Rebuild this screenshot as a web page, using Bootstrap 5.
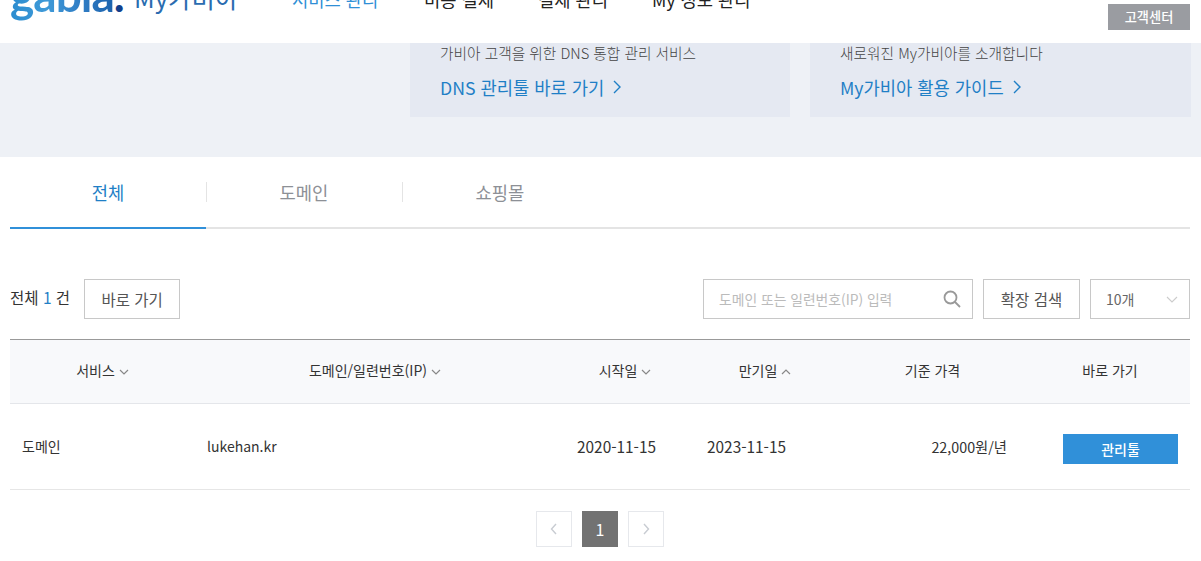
<!DOCTYPE html>
<html lang="ko"><head><meta charset="utf-8">
<link href="https://cdn.jsdelivr.net/npm/bootstrap@5.3.0/dist/css/bootstrap.min.css" rel="stylesheet">
<style>
html,body{height:561px;overflow:hidden}
body{font-family:"Noto Sans CJK KR","Noto Sans",sans-serif;color:#333;font-size:14px;background:#fff}
.top-bar{height:43px;overflow:hidden;align-items:flex-start}
.logo-word{font-family:Lato,sans-serif;font-weight:700;font-size:46px;line-height:50px;margin:-30px 0 0 10px;width:125px;flex:none;white-space:nowrap;letter-spacing:-1px}
.logo-txt{background:linear-gradient(90deg,#2b8ccf,#3f9ad8 35%,#2f7cc4 70%,#1d63ad);-webkit-background-clip:text;background-clip:text;-webkit-text-fill-color:transparent}
.logo-dot{color:#123f8c}
.logo-sub{font-size:25.5px;line-height:36px;color:#2a6cb0;margin-top:-21px;margin-left:-1px;width:158px;flex:none;white-space:nowrap}
.gnb-item{font-size:17.7px;line-height:26px;color:#222;margin-top:-14px;white-space:nowrap;flex:none}
.gnb-on{color:#2f8fd6;width:132px}.gnb-2{width:114px}.gnb-3{width:114px}
.support-btn{margin:4px 11px 0 auto;width:82px;height:26px;background:#9a9ca1;color:#fff;font-size:13.2px;font-weight:500;line-height:26px;text-align:center}
.banner-band{height:114px;background:#eef1f6;padding-left:410px;gap:20px}
.banner-box{width:380px;height:74px;background:#e5e9f2;padding-left:30px}
.box-2{width:381px}
.banner-sub{font-size:14.7px;line-height:20px;color:#444;height:20px;font-weight:300}
.banner-link{font-size:17.7px;line-height:26px;color:#1f7fc6;margin-top:11px;gap:9px}
.tab-row{height:72px;margin:0 11px 0 10px;border-bottom:2px solid #e4e4e4}
.tab-cell{width:196px;height:72px;font-size:17.7px;color:#8d9096;padding-top:22px;text-align:center;line-height:26px;position:relative}
.tab-cell+.tab-cell::before{content:"";position:absolute;left:0;top:25px;height:20px;border-left:1px solid #e4e4e4}
.tab-on{color:#1f7fc6;border-bottom:2px solid #3090d9}
.tool-row{margin:50px 11px 20px 10px;height:40px}
.count{font-size:15.5px;line-height:20px;color:#333;margin-right:14px;margin-bottom:4px}
.count b{font-weight:400;color:#1f7fc6}
.line-btn{height:40px;border:1px solid #c8c8c8;background:#fff;font-size:15.5px;color:#555;line-height:38px;text-align:center}
.go-btn{width:96px}.ext-btn{width:97px;margin-left:10px}
.sel-box{width:100px;margin-left:10px;padding:0 11px 0 15px;justify-content:space-between;color:#666;font-size:14px}
.search-box{width:270px;margin-left:auto;padding:0 11px 0 15px;justify-content:space-between;color:#bbb;font-size:13.8px}
.grid-tbl{margin:0 11px 0 10px;width:1180px;table-layout:fixed;border-collapse:collapse}
.grid-tbl th{height:64px;background:#f8f9fb;border-top:1px solid #999;border-bottom:1px solid #e4e6ea;font-weight:400;font-size:14px;color:#333;text-align:center;vertical-align:middle;padding:0 0 2px}
.grid-tbl td{height:86px;border-bottom:1px solid #e6e6e6;font-size:14px;color:#333;padding:0;vertical-align:middle}
.grid-tbl td.cell-l{padding-left:12px}
.grid-tbl td.date-a{padding-left:22px;font-size:15.4px}
.grid-tbl td.date-b{padding-left:12px;font-size:15.4px}
.grid-tbl td.price{padding-right:23px;text-align:right;font-size:14.3px}
.sort{display:inline-block;vertical-align:1px;margin-left:4px}
.manage-btn{display:block;width:115px;height:30px;background:#3090d9;color:#fff;font-size:14px;line-height:30px;text-align:center;font-weight:500;margin:4px 12px 0 auto}
.pager{gap:10px;margin:21px 1px 0 0}
.pg{width:36px;height:36px;border:1px solid #e6e8ec;background:#fff;color:#aaa;align-items:center;justify-content:center}
.pg-on{background:#727272;border-color:#727272;color:#fff;font-size:16px}
</style></head><body>
<header class="top-bar d-flex">
<div class="logo-word"><span class="logo-txt">gabia</span><span class="logo-dot">.</span></div>
<div class="logo-sub">My가비아</div>
<div class="gnb-item gnb-on">서비스 관리</div>
<div class="gnb-item gnb-2">비용 결제</div>
<div class="gnb-item gnb-3">결제 관리</div>
<div class="gnb-item">My 정보 관리</div>
<div class="support-btn">고객센터</div>
</header>
<section class="banner-band d-flex">
<div class="banner-box"><div class="banner-sub">가비아 고객을 위한 DNS 통합 관리 서비스</div>
<div class="banner-link d-flex align-items-center">DNS 관리툴 바로 가기 <svg width="9" height="14" viewBox="0 0 9 14" fill="none" stroke="#1f7fc6" stroke-width="1.4"><path d="M1 1l6 6-6 6"/></svg></div></div>
<div class="banner-box box-2"><div class="banner-sub">새로워진 My가비아를 소개합니다</div>
<div class="banner-link d-flex align-items-center">My가비아 활용 가이드 <svg width="9" height="14" viewBox="0 0 9 14" fill="none" stroke="#1f7fc6" stroke-width="1.4"><path d="M1 1l6 6-6 6"/></svg></div></div>
</section>
<nav class="tab-row d-flex">
<div class="tab-cell tab-on">전체</div><div class="tab-cell">도메인</div><div class="tab-cell">쇼핑몰</div>
</nav>
<div class="tool-row d-flex align-items-center">
<span class="count">전체 <b>1</b> 건</span>
<div class="line-btn go-btn">바로 가기</div>
<div class="line-btn search-box d-flex align-items-center"><span>도메인 또는 일련번호(IP) 입력</span>
<svg width="18" height="18" viewBox="0 0 18 18" fill="none" stroke="#999" stroke-width="1.8"><circle cx="7.500" cy="7.500" r="6"/><path d="M12 12l5 5"/></svg></div>
<div class="line-btn ext-btn">확장 검색</div>
<div class="line-btn sel-box d-flex align-items-center"><span>10개</span>
<svg width="12" height="7" viewBox="0 0 12 7" fill="none" stroke="#ccc" stroke-width="1.1"><path d="M1 1l5 5 5-5"/></svg></div>
</div>
<table class="grid-tbl">
<colgroup><col style="width:185px"><col style="width:360px"><col style="width:140px"><col style="width:140px"><col style="width:195px"><col style="width:160px"></colgroup>
<thead><tr>
<th>서비스<svg class="sort" width="10" height="6" viewBox="0 0 10 6" fill="none" stroke="#888" stroke-width="1.2"><path d="M1 1l4 4 4-4"/></svg></th>
<th>도메인/일련번호(IP)<svg class="sort" width="10" height="6" viewBox="0 0 10 6" fill="none" stroke="#888" stroke-width="1.2"><path d="M1 1l4 4 4-4"/></svg></th>
<th>시작일<svg class="sort" width="10" height="6" viewBox="0 0 10 6" fill="none" stroke="#888" stroke-width="1.2"><path d="M1 1l4 4 4-4"/></svg></th>
<th>만기일<svg class="sort" width="10" height="6" viewBox="0 0 10 6" fill="none" stroke="#888" stroke-width="1.2"><path d="M1 5l4-4 4 4"/></svg></th>
<th>기준 가격</th><th>바로 가기</th>
</tr></thead>
<tbody><tr>
<td class="cell-l">도메인</td><td class="cell-l">lukehan.kr</td><td class="date-a">2020-11-15</td><td class="date-b">2023-11-15</td><td class="price">22,000원/년</td><td><span class="manage-btn">관리툴</span></td>
</tr></tbody></table>
<div class="pager d-flex justify-content-center">
<div class="pg d-flex"><svg width="8" height="12" viewBox="0 0 8 12" fill="none" stroke="#c8ccd2" stroke-width="1.4"><path d="M6 1L1.500 6 6 11"/></svg></div>
<div class="pg pg-on d-flex">1</div>
<div class="pg d-flex"><svg width="8" height="12" viewBox="0 0 8 12" fill="none" stroke="#c8ccd2" stroke-width="1.4"><path d="M2 1l4.500 5L2 11"/></svg></div>
</div>
<script src="https://cdn.jsdelivr.net/npm/bootstrap@5.3.0/dist/js/bootstrap.bundle.min.js"></script>
</body></html>
